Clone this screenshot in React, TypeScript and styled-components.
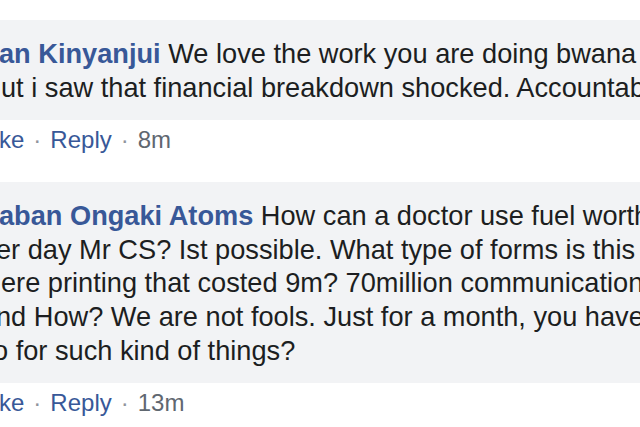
import React from "react";
import styled, { createGlobalStyle } from "styled-components";

const Global = createGlobalStyle`
  html, body { margin: 0; padding: 0; background: #ffffff; }
  body { overflow: hidden; width: 640px; height: 427px; }
`;

const Page = styled.div`
  width: 640px;
  height: 427px;
  overflow: hidden;
  padding-top: 20px;
  box-sizing: border-box;
  font-family: "Liberation Sans", Arial, Helvetica, sans-serif;
  background: #ffffff;
`;

const Comment = styled.div`
  display: flex;
  flex-direction: column;
  margin-bottom: 28px;
`;

const Bubble = styled.div`
  background: #f2f3f5;
  width: 700px;
  padding: 17px 0 16px;
  display: flex;
  flex-direction: column;
`;

const Line = styled.div<{ $shift?: number }>`
  white-space: nowrap;
  font-size: 27.2px;
  line-height: 33.6px;
  color: #1c1e21;
  margin-left: ${(p) => p.$shift ?? 0}px;
`;

const Name = styled.span`
  font-weight: 700;
  color: #385898;
`;

const Actions = styled.div<{ $shift?: number }>`
  display: flex;
  align-items: baseline;
  margin-top: 6px;
  margin-left: ${(p) => p.$shift ?? 0}px;
  font-size: 24px;
  line-height: 28px;
  white-space: nowrap;
`;

const Action = styled.span`
  color: #385898;
`;

const Dot = styled.span`
  color: #90949c;
  padding: 0 9px;
`;

const Time = styled.span`
  color: #606770;
`;

type CommentData = {
  name: string;
  lines: { text: string; shift: number }[];
  time: string;
};

const comments: CommentData[] = [
  {
    name: "an Kinyanjui",
    lines: [
      { text: " We love the work you are doing bwana", shift: -1 },
      { text: "ut i saw that financial breakdown shocked. Accountability", shift: 1 },
    ],
    time: "8m",
  },
  {
    name: "aban Ongaki Atoms",
    lines: [
      { text: " How can a doctor use fuel worth", shift: -1 },
      { text: "er day Mr CS? Ist possible. What type of forms is this", shift: -4 },
      { text: "ere printing that costed 9m? 70million communication", shift: 1 },
      { text: "nd How? We are not fools. Just for a month, you have", shift: -4 },
      { text: "o for such kind of things?", shift: -7 },
    ],
    time: "13m",
  },
];

export default function App() {
  return (
    <>
      <Global />
      <Page>
        {comments.map((c) => (
          <Comment key={c.name}>
            <Bubble>
              {c.lines.map((l, i) => (
                <Line key={i} $shift={l.shift}>
                  {i === 0 && <Name>{c.name}</Name>}
                  {l.text}
                </Line>
              ))}
            </Bubble>
            <Actions $shift={-1}>
              <Action>ke</Action>
              <Dot>·</Dot>
              <Action>Reply</Action>
              <Dot>·</Dot>
              <Time>{c.time}</Time>
            </Actions>
          </Comment>
        ))}
      </Page>
    </>
  );
}
